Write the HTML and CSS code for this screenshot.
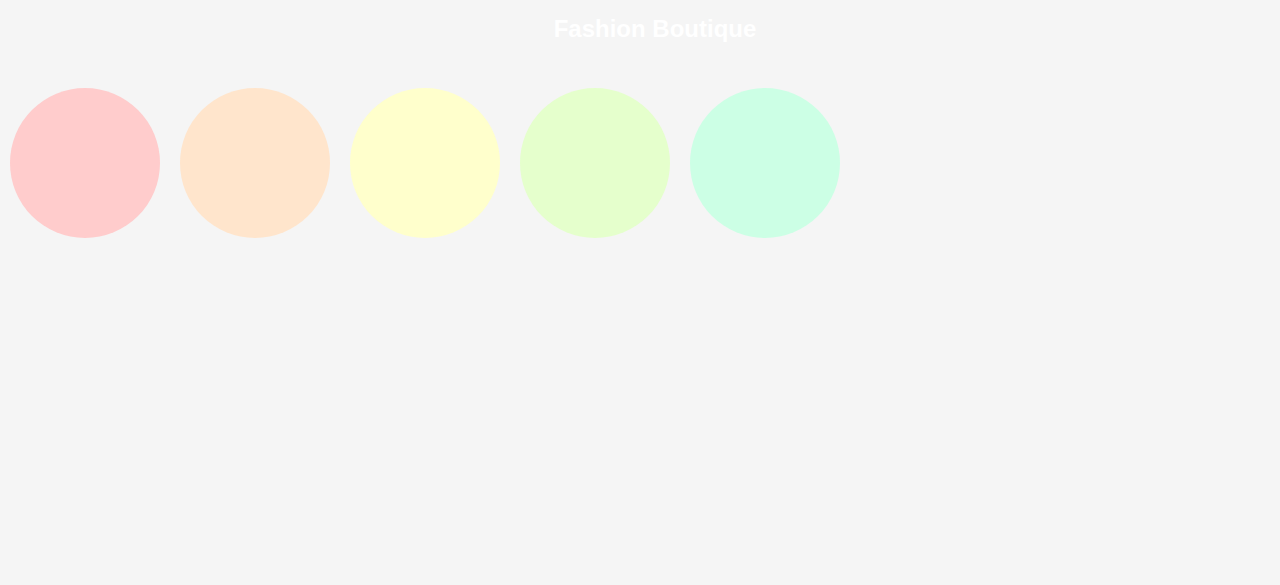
FILE: index.html
```html
<!DOCTYPE html>
<html>
<head>
<meta charset="utf-8">
<title>Fashion Boutique</title>
<link rel="stylesheet" href="styles.css">
</head>
<body>
<header class="header">
  <h1 class="title">Fashion Boutique</h1>
</header>
<main class="swatches">
  <div class="swatch swatch-1"></div>
  <div class="swatch swatch-2"></div>
  <div class="swatch swatch-3"></div>
  <div class="swatch swatch-4"></div>
  <div class="swatch swatch-5"></div>
</main>
</body>
</html>
```

FILE: styles.css
```css
html {
  overflow-x: scroll;
  overflow-y: auto;
}
html, body {
  margin: 0;
  padding: 0;
  background: #f5f5f5;
  font-family: "Liberation Sans", Arial, sans-serif;
}
::-webkit-scrollbar {
  height: 15px;
  width: 15px;
  background: #f1f1f1;
}
::-webkit-scrollbar-track {
  background: #f1f1f1;
}
::-webkit-scrollbar-thumb {
  background: #c1c1c1;
  border-top: 2px solid #f1f1f1;
  border-bottom: 2px solid #f1f1f1;
  background-clip: padding-box;
}
::-webkit-scrollbar-button:single-button {
  display: block;
  width: 15px;
  height: 15px;
  background-color: #f1f1f1;
}
::-webkit-scrollbar-button:single-button:horizontal:decrement {
  background-image:
    linear-gradient(to top left, transparent 50%, #a3a3a3 50%),
    linear-gradient(to bottom left, transparent 50%, #a3a3a3 50%);
  background-size: 4px 4px, 4px 4px;
  background-position: 5px 3.5px, 5px 7.5px;
  background-repeat: no-repeat;
}
::-webkit-scrollbar-button:single-button:horizontal:increment {
  background-image:
    linear-gradient(to top right, transparent 50%, #505050 50%),
    linear-gradient(to bottom right, transparent 50%, #505050 50%);
  background-size: 4px 4px, 4px 4px;
  background-position: 6px 3.5px, 6px 7.5px;
  background-repeat: no-repeat;
}
.header {
  width: 100%;
  padding: 15px;
  text-align: center;
}
.title {
  margin: 0;
  font-size: 24px;
  font-weight: bold;
  color: #ffffff;
}
.swatches {
  display: flex;
  padding-top: 20px;
}
.swatch {
  width: 150px;
  height: 150px;
  margin: 10px;
  border-radius: 50%;
}
.swatch-1 { background: #ffcccc; }
.swatch-2 { background: #ffe5cc; }
.swatch-3 { background: #ffffcc; }
.swatch-4 { background: #e5ffcc; }
.swatch-5 { background: #ccffe5; }
```
